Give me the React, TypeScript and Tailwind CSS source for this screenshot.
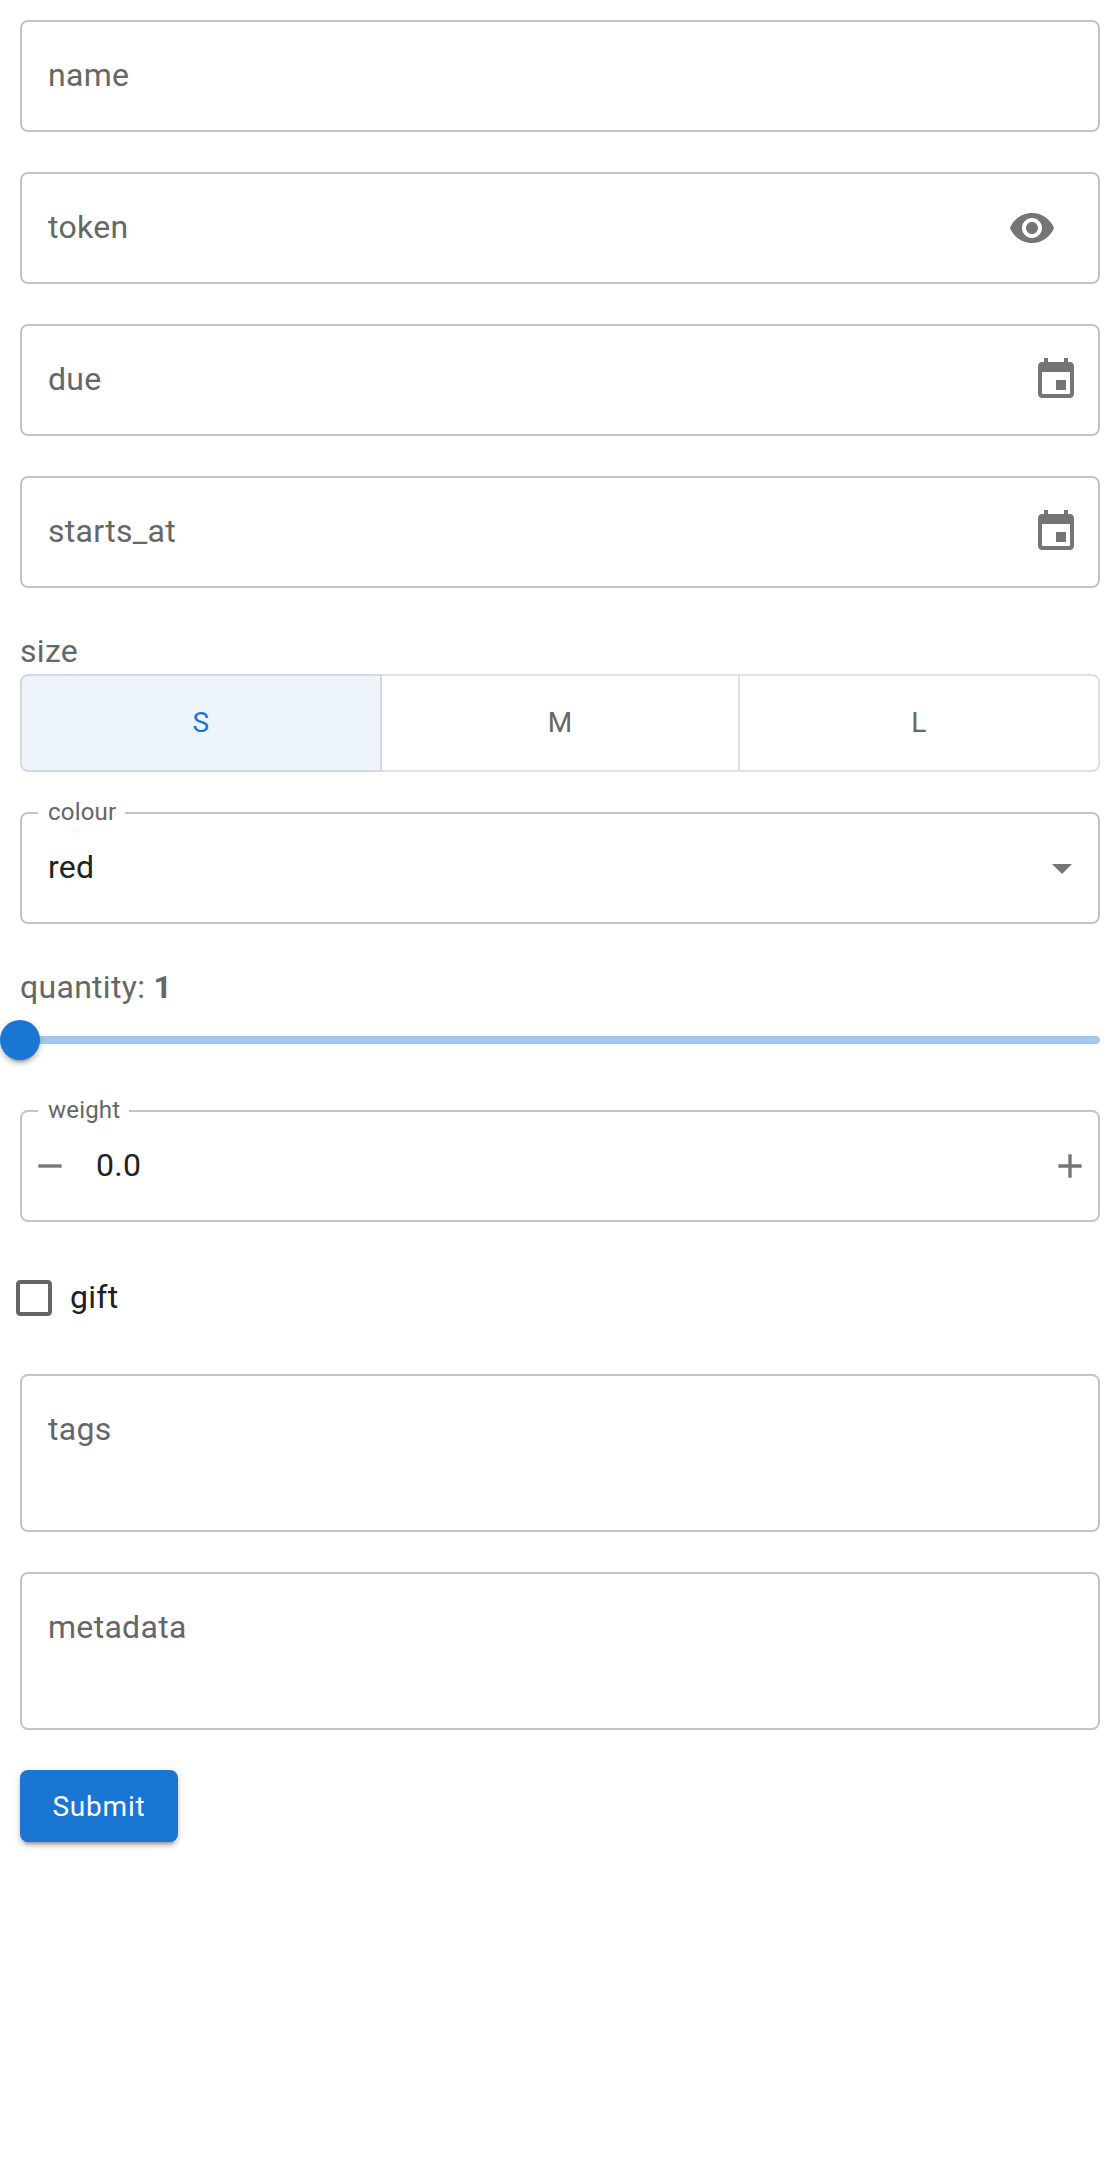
const font = { fontFamily: 'Roboto, sans-serif' };

const elevation = 'shadow-[0_6px_2px_-4px_rgba(0,0,0,0.2),0_4px_4px_0_rgba(0,0,0,0.14),0_2px_10px_0_rgba(0,0,0,0.12)]';

function Icon({ d, size = 48, className = '' }: { d: string; size?: number; className?: string }) {
  return (
    <svg viewBox="0 0 24 24" width={size} height={size} className={`fill-[#757575] shrink-0 ${className}`}>
      <path d={d} />
    </svg>
  );
}

const eye = 'M12 4.5C7 4.5 2.73 7.61 1 12c1.73 4.39 6 7.5 11 7.5s9.27-3.11 11-7.5c-1.73-4.39-6-7.5-11-7.5zM12 17c-2.76 0-5-2.24-5-5s2.24-5 5-5 5 2.24 5 5-2.24 5-5 5zm0-8c-1.66 0-3 1.34-3 3s1.34 3 3 3 3-1.34 3-3-1.34-3-3-3z';
const event = 'M17 12h-5v5h5v-5zM16 1v2H8V1H6v2H5c-1.11 0-1.99.9-1.99 2L3 19c0 1.1.89 2 2 2h14c1.1 0 2-.9 2-2V5c0-1.1-.9-2-2-2h-1V1h-2zm3 18H5V8h14v11z';

function Field({ label, icon }: { label: string; icon?: React.ReactNode }) {
  return (
    <div className="h-[112px] flex items-center justify-between border-2 border-[#c4c4c4] rounded-lg pl-[26px] pr-[18px]">
      <span className="mb-[2px] text-[32px] leading-[46px] tracking-[0.3px] text-[#666666]">{label}</span>
      {icon}
    </div>
  );
}

function Area({ label }: { label: string }) {
  return (
    <div className="h-[158px] border-2 border-[#c4c4c4] rounded-lg pl-[26px] pt-[30px]">
      <span className="block text-[32px] leading-[46px] tracking-[0.3px] text-[#666666]">{label}</span>
    </div>
  );
}

function Outlined({ label, children }: { label: string; children: React.ReactNode }) {
  return (
    <div className="relative h-[112px] flex items-center border-2 border-[#c4c4c4] rounded-lg">
      <span className="absolute left-[16px] top-[-18px] pl-[10px] pr-[9px] bg-white text-[24px] leading-[32px] tracking-[0.2px] text-[#666666]">{label}</span>
      {children}
    </div>
  );
}

export default function App() {
  return (
    <div style={font} className="w-[1120px] h-[2160px] bg-white px-5 py-5 flex flex-col">
      <div className="flex flex-col gap-10">
        <Field label="name" />
        <Field label="token" icon={<Icon d={eye} className="mr-[24px]" />} />
        <Field label="due" icon={<Icon d={event} />} />
        <Field label="starts_at" icon={<Icon d={event} />} />

        <div className="flex flex-col">
          <span className="text-[32px] leading-[46px] tracking-[0.3px] text-[#666666]">size</span>
          <div className="flex h-[98px] text-[28px] tracking-[0.3px] text-[#666666]">
            <div className="w-[362px] flex items-center justify-center bg-[#edf4fb] text-[#1976d2] border-2 border-[#d1d9e1] rounded-l-lg">S</div>
            <div className="w-[358px] flex items-center justify-center border-y-2 border-r-2 border-[#e0e0e0]">M</div>
            <div className="w-[360px] flex items-center justify-center border-y-2 border-r-2 border-[#e0e0e0] rounded-r-lg">L</div>
          </div>
        </div>

        <Outlined label="colour">
          <span className="mb-[2px] pl-[26px] flex-1 text-[32px] tracking-[0.3px] text-[#212121]">red</span>
          <Icon d="M7 10l5 5 5-5z" className="mr-[12px]" />
        </Outlined>

        <div className="flex flex-col">
          <span className="text-[32px] leading-[46px] tracking-[0.3px] text-[#666666]">quantity: <b className="font-bold">1</b></span>
          <div className="relative h-[8px] mt-[26px] rounded-full bg-[#a3c8ed]">
            <div className={`absolute left-[-20px] top-[-16px] w-10 h-10 rounded-full bg-[#1976d2] ${elevation}`} />
          </div>
        </div>

        <div className="mt-[26px]">
          <Outlined label="weight">
            <Icon d="M19 13H5v-2h14v2z" size={40} className="ml-[8px]" />
            <span className="mb-[2px] ml-[26px] flex-1 text-[32px] tracking-[0.3px] text-[#212121]">0.0</span>
            <Icon d="M19 13h-6v6h-2v-6H5v-2h6V5h2v6h6v2z" size={40} className="mr-[8px]" />
          </Outlined>
        </div>

        <div className="flex items-center h-[72px] ml-[-22px]">
          <svg viewBox="0 0 24 24" width={48} height={48} className="fill-[#666666] m-3">
            <path d="M19 5v14H5V5h14m0-2H5c-1.1 0-2 .9-2 2v14c0 1.1.9 2 2 2h14c1.1 0 2-.9 2-2V5c0-1.1-.9-2-2-2z" />
          </svg>
          <span className="mb-[2px] text-[32px] tracking-[0.3px] text-[#212121]">gift</span>
        </div>

        <Area label="tags" />
        <Area label="metadata" />

        <button className={`self-start h-[72px] w-[158px] pt-[2px] rounded-lg bg-[#1976d2] text-white text-[28px] font-normal tracking-[0.8px] ${elevation}`}>
          Submit
        </button>
      </div>
    </div>
  );
}
